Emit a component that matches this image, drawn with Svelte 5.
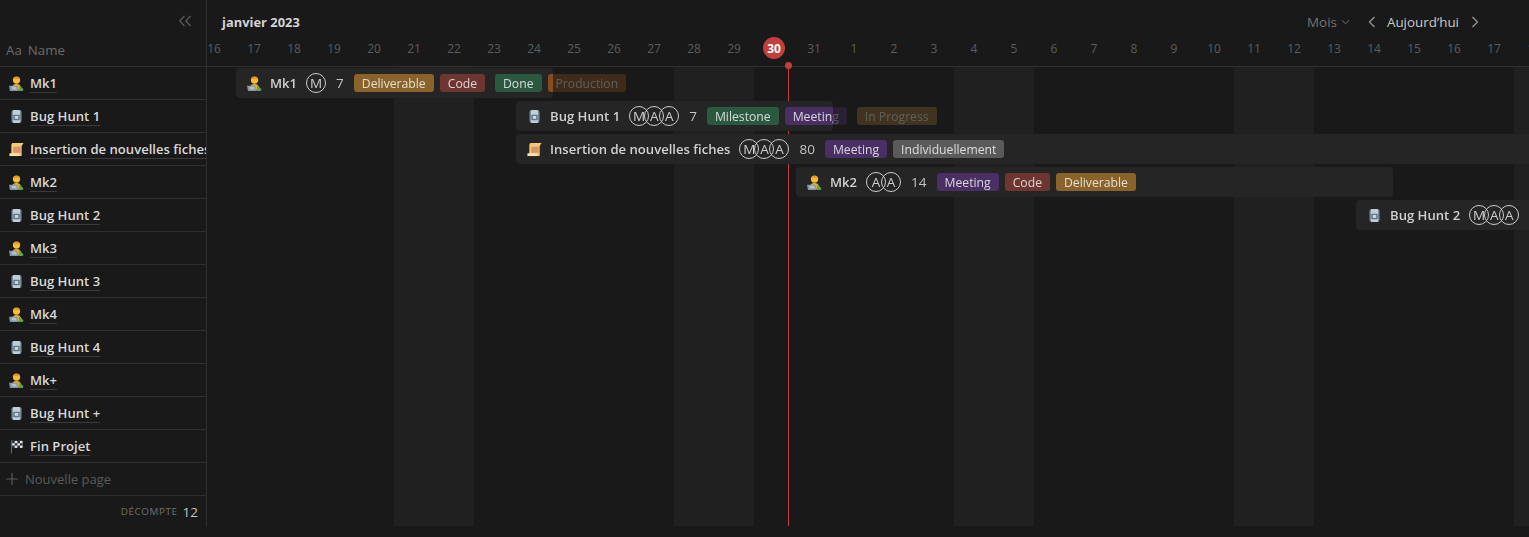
<script lang="ts">
  const days = [16,17,18,19,20,21,22,23,24,25,26,27,28,29,30,31,1,2,3,4,5,6,7,8,9,10,11,12,13,14,15,16,17,18];
  const weekend = new Set([5,6,12,13,19,20,26,27,33]);
  const TODAY = 14;
  const TL_LEFT = 207;

  const pages = [
    { name: 'Mk1', icon: 'dev' },
    { name: 'Bug Hunt 1', icon: 'can' },
    { name: 'Insertion de nouvelles fiches', icon: 'scroll' },
    { name: 'Mk2', icon: 'dev' },
    { name: 'Bug Hunt 2', icon: 'can' },
    { name: 'Mk3', icon: 'dev' },
    { name: 'Bug Hunt 3', icon: 'can' },
    { name: 'Mk4', icon: 'dev' },
    { name: 'Bug Hunt 4', icon: 'can' },
    { name: 'Mk+', icon: 'dev' },
    { name: 'Bug Hunt +', icon: 'can' },
    { name: 'Fin Projet', icon: 'flag' },
  ];

  // bars by row index, x/w in page pixels
  const bars: Record<number, any> = {
    0: { x: 236, w: 317, people: ['M'], count: 7, groups: [[['Deliverable','yellow'],['Code','red']], [['Done','green'],['Production','orange']]] },
    1: { x: 516, w: 317, people: ['M','A','A'], count: 7, groups: [[['Milestone','green'],['Meeting','purple']], [['In Progress','yellow']]] },
    2: { x: 516, w: 1040, people: ['M','A','A'], count: 80, groups: [[['Meeting','purple'],['Individuellement','grey']]] },
    3: { x: 796, w: 597, people: ['A','A'], count: 14, groups: [[['Meeting','purple'],['Code','red'],['Deliverable','yellow']]] },
    4: { x: 1356, w: 317, people: ['M','A','A'], count: null, groups: [] },
  };
</script>

{#snippet icon(kind)}
  <svg class="emoji" viewBox="0 0 16 16" aria-hidden="true">
    {#if kind === 'dev'}
      <path d="M2.500 15c0-4.500 2.500-6.500 5.500-6.500s5.500 2 5.500 6.500Z" fill="#e0a92f" />
      <circle cx="8" cy="4.300" r="3.900" fill="#f5bd38" />
      <path d="M4.100 4C4.300.2 11.700.2 11.900 4 10 2.700 6 2.700 4.100 4Z" fill="#e88f26" />
      <path d="M0 10.500h8.500L10.500 16H1Z" fill="#8497a5" />
      <path d="M2.500 11.500h5l1 3h-5Z" fill="#b4c2cc" />
      <path d="M11 10.500l4.500 3.500-1 2H10.500Z" fill="#58a84a" />
    {:else if kind === 'can'}
      <rect x="2.500" y="1" width="11" height="14" rx="2.500" fill="#5f7685" />
      <rect x="4" y="1" width="8" height="14" rx="1.500" fill="#c0ced6" />
      <rect x="4.500" y="6" width="7" height="6" rx="1" fill="#61788a" />
      <rect x="6.200" y="7.500" width="3.600" height="3" fill="#cfd9df" />
    {:else if kind === 'scroll'}
      <path d="M3.500 1h12l-2 3.200V15H.5l2-3V3Z" fill="#f4c978" />
      <rect x="4.500" y="5" width="8" height="6.500" fill="#d8946a" />
      <path d="M.5 12h10v3H.5Z" fill="#f9e0aa" />
    {:else}
      <rect x="2" y="1" width="1.300" height="14.500" fill="#51606b" />
      <path d="M3.300 2h11.200v7.500H3.300Z" fill="#e4e8eb" />
      <path d="M3.300 2h2.800v2.500H3.300ZM8.900 2h2.800v2.500H8.900ZM6.100 4.500h2.800V7H6.100ZM11.700 4.500h2.800V7h-2.800ZM3.300 7h2.800v2.500H3.300ZM8.900 7h2.800v2.500H8.900Z" fill="#2a2f33" />
    {/if}
  </svg>
{/snippet}

<div class="gantt">
  <aside class="side">
    <div class="side-head">
      <svg class="collapse" viewBox="0 0 12 12" aria-hidden="true"><path d="M5.500 1 .8 6l4.700 5M11.500 1 6.800 6l4.700 5" /></svg>
      <div class="col-title"><span class="aa">Aa</span><span>Name</span></div>
    </div>
    {#each pages as page}
      <div class="side-row">
        {@render icon(page.icon)}
        <span class="page-name">{page.name}</span>
      </div>
    {/each}
    <div class="side-row new-page">
      <svg class="plus" viewBox="0 0 12 12" aria-hidden="true"><path d="M6 0v12M0 6h12" /></svg>
      <span>Nouvelle page</span>
    </div>
    <div class="side-foot"><span class="count-label">DÉCOMPTE</span><span class="count-num">12</span></div>
  </aside>

  <section class="timeline">
    <header class="tl-head">
      <div class="tl-top">
        <strong class="month">janvier 2023</strong>
        <div class="nav">
          <span class="mode">Mois</span>
          <svg class="chev-down" viewBox="0 0 10 6" aria-hidden="true"><path d="M1 1l4 4 4-4" /></svg>
          <svg class="chev prev" viewBox="0 0 8 12" aria-hidden="true"><path d="M6.500 1 1.500 6l5 5" /></svg>
          <span class="today-btn">Aujourd’hui</span>
          <svg class="chev next" viewBox="0 0 8 12" aria-hidden="true"><path d="M1.500 1l5 5-5 5" /></svg>
        </div>
      </div>
      <div class="days">
        {#each days as d, i}
          <div class="day">
            <span class:today={i === TODAY}>{d}</span>
          </div>
        {/each}
      </div>
    </header>

    <div class="tl-body">
      <div class="bands">
        {#each days as d, i}
          <div class="band" class:weekend={weekend.has(i)}></div>
        {/each}
      </div>
      <div class="today-line"></div>
      {#each pages as page, r}
        <div class="tl-row">
          {#if bars[r]}
            {@const b = bars[r]}
            <div class="bar" style="margin-left:{b.x - TL_LEFT}px;width:{b.w}px">
              <div class="bar-content" style="--split:{b.w - 11}px">
                {@render icon(page.icon)}
                <span class="bar-name">{page.name}</span>
                <span class="people">
                  {#each b.people as p}<span class="person">{p}</span>{/each}
                </span>
                {#if b.count !== null}<span class="num">{b.count}</span>{/if}
                {#each b.groups as group}
                  <span class="tags">
                    {#each group as [label, color]}<span class="tag {color}">{label}</span>{/each}
                  </span>
                {/each}
              </div>
            </div>
          {/if}
        </div>
      {/each}
    </div>
  </section>
</div>

<style>
  :global(body) {
    background: #191919;
    font-family: "Open Sans", "Noto Sans", sans-serif;
  }

  .gantt {
    display: flex;
    width: 1529px;
    height: 526px;
    overflow: hidden;
    color: #d4d4d4;
    font-size: 14px;
  }

  /* Left column */
  .side {
    flex: 0 0 207px;
    box-sizing: border-box;
    border-right: 1px solid #2f2f2f;
    overflow: hidden;
  }

  .side-head {
    height: 67px;
    box-sizing: border-box;
    border-bottom: 1px solid #2f2f2f;
    display: flex;
    flex-direction: column;
    justify-content: space-between;
    align-items: stretch;
    padding: 15px 0 7px 6px;
  }

  .collapse {
    width: 12px;
    height: 12px;
    align-self: flex-end;
    margin-right: 15px;
    fill: none;
    stroke: #5f5f5f;
    stroke-width: 1.1;
  }

  .col-title {
    display: flex;
    gap: 6px;
    color: #6b6b6b;
    font-size: 13.3px;
    line-height: 18px;
  }

  .side-row {
    height: 33px;
    box-sizing: border-box;
    border-bottom: 1px solid #2f2f2f;
    display: flex;
    align-items: center;
    gap: 6px;
    padding: 1px 0 0 9px;
    white-space: nowrap;
  }

  .emoji {
    flex: 0 0 15px;
    width: 15px;
    height: 15px;
  }

  .page-name {
    font-size: 13.1px;
    font-weight: 600;
    line-height: 17px;
    color: #d8d8d8;
    border-bottom: 1px solid #3a3a3a;
  }

  .new-page {
    padding: 0 0 0 6px;
    gap: 7px;
    color: #5a5a5a;
    font-size: 13px;
  }

  .plus {
    width: 12px;
    height: 12px;
    fill: none;
    stroke: #5a5a5a;
    stroke-width: 1.2;
  }

  .side-foot {
    height: 31px;
    display: flex;
    justify-content: flex-end;
    align-items: center;
    gap: 5px;
    padding-right: 8px;
  }

  .count-label {
    font-size: 9.8px;
    letter-spacing: 0.6px;
    color: #707070;
  }

  .count-num {
    font-size: 13.5px;
    color: #c4c4c4;
  }

  /* Timeline */
  .timeline {
    flex: 1;
    min-width: 0;
    overflow: hidden;
  }

  .tl-head {
    height: 67px;
    box-sizing: border-box;
    border-bottom: 1px solid #2f2f2f;
  }

  .tl-top {
    height: 37px;
    display: flex;
    justify-content: space-between;
    align-items: center;
    padding: 6px 0 0 15px;
    box-sizing: border-box;
  }

  .month {
    font-size: 12.9px;
    font-weight: 700;
    color: #d4d4d4;
  }

  .nav {
    display: flex;
    align-items: center;
    margin-right: 50px;
    font-size: 13.4px;
  }

  .mode {
    color: #737373;
  }

  .chev-down {
    width: 9px;
    height: 6px;
    margin-left: 4px;
    fill: none;
    stroke: #737373;
    stroke-width: 1.1;
  }

  .chev {
    width: 8px;
    height: 12px;
    fill: none;
    stroke: #9a9a9a;
    stroke-width: 1.2;
  }

  .prev { margin-left: 18px; }
  .next { margin-left: 12px; }

  .today-btn {
    margin-left: 11px;
    color: #c9c9c9;
  }

  .days {
    display: flex;
    margin-left: -13px;
  }

  .day {
    flex: 0 0 40px;
    height: 22px;
    display: flex;
    justify-content: center;
    align-items: center;
    font-size: 12px;
    color: #5c5c5c;
  }

  .day .today {
    width: 22px;
    height: 22px;
    border-radius: 50%;
    background: #c13f3d;
    color: #fff;
    font-weight: 700;
    display: flex;
    justify-content: center;
    align-items: center;
  }

  .tl-body {
    position: relative;
    height: 459px;
  }

  .bands {
    position: absolute;
    inset: 0 0 0 -13px;
    display: flex;
  }

  .band {
    flex: 0 0 40px;
  }

  .band.weekend {
    background: #202020;
  }

  .today-line {
    position: absolute;
    left: 581px;
    top: 0;
    bottom: 0;
    width: 1px;
    background: #c13f3d;
  }

  .today-line::before {
    content: '';
    position: absolute;
    top: -5px;
    left: -3px;
    width: 7px;
    height: 7px;
    border-radius: 50%;
    background: #c13f3d;
  }

  .tl-row {
    position: relative;
    height: 33px;
    box-sizing: border-box;
    padding-top: 1px;
  }

  .bar {
    height: 30px;
    background: #252525;
    border-radius: 4px;
    display: flex;
    align-items: center;
    padding-left: 11px;
    box-sizing: border-box;
  }

  /* whatever runs past the end of the bar is dimmed */
  .bar-content {
    flex: none;
    display: flex;
    align-items: center;
    width: max-content;
    gap: 10px;
    white-space: nowrap;
    mask-image: linear-gradient(90deg, #000 var(--split), rgba(0, 0, 0, 0.35) var(--split));
  }

  .bar-name {
    font-size: 13.1px;
    font-weight: 600;
    color: #d0d0d0;
    margin: 0 -1px 0 -2px;
  }

  .people {
    display: flex;
  }

  .person {
    width: 20px;
    height: 20px;
    box-sizing: border-box;
    border: 1px solid #cdcdcd;
    border-radius: 50%;
    display: flex;
    justify-content: center;
    align-items: center;
    font-size: 13.5px;
    color: #cdcdcd;
  }

  .person + .person {
    margin-left: -5px;
  }

  .num {
    font-size: 13.5px;
    color: #c4c4c4;
  }

  .tags {
    display: flex;
    gap: 6px;
  }

  .tag {
    height: 18px;
    padding: 0 8px;
    border-radius: 3px;
    font-size: 12.2px;
    line-height: 19px;
    color: rgba(255, 255, 255, 0.78);
  }

  .yellow { background: #89632a; }
  .red { background: #6e3630; }
  .green { background: #2b593f; }
  .orange { background: #854c1d; }
  .purple { background: #492f64; }
  .grey { background: #5a5a5a; }
</style>
